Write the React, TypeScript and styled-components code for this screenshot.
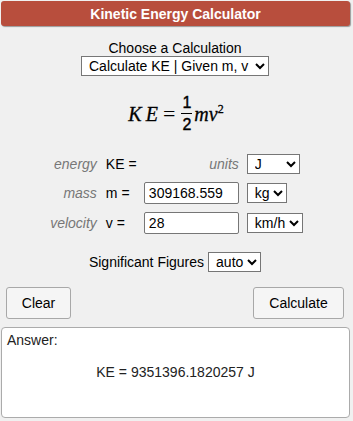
import React from "react";
import styled, { createGlobalStyle } from "styled-components";

const Global = createGlobalStyle`
  html, body { margin: 0; padding: 0; background: #f0f0f0; }
  body { font-family: "Liberation Sans", Arial, sans-serif; font-size: 14px; color: #000; }
  * { box-sizing: border-box; }
`;

const Page = styled.div`
  width: 353px;
  padding: 1px 4px 0 1px;
  display: flex;
  flex-direction: column;
`;

const Header = styled.div`
  height: 25px;
  width: 349px;
  background: #b84e3d;
  border-radius: 3px;
  box-shadow: 1px 1px 1px #9a9a9a;
  color: #fff;
  font-weight: bold;
  font-size: 14px;
  display: flex;
  align-items: center;
  justify-content: center;
`;

const ChooseBlock = styled.div`
  margin-top: 14px;
  display: flex;
  flex-direction: column;
  align-items: center;
  line-height: 16px;
`;

const Select = styled.select<{ $w: number }>`
  width: ${(p) => p.$w}px;
  height: 20px;
  font-family: "Liberation Sans", Arial, sans-serif;
  font-size: 14px;
  color: #000;
  background: #fff;
  border: 1px solid #767676;
  border-radius: 0;
  padding: 0 0 0 3px;
`;

const Formula = styled.div`
  margin-top: 16px;
  height: 43px;
  display: flex;
  justify-content: center;
  align-items: center;
  font-family: "Liberation Serif", "Times New Roman", serif;
  font-size: 20px;
  line-height: 20px;
  color: #000;
  padding-left: 2px;
`;

const MathIt = styled.span<{ $ls?: number }>`
  font-style: italic;
  letter-spacing: ${(p) => p.$ls ?? 0}px;
  -webkit-text-stroke: 0.3px #000;
`;

const Eq = styled.span`
  margin: 0 6px 0 1px;
  font-size: 22px;
`;

const Frac = styled.span`
  display: inline-flex;
  flex-direction: column;
  align-items: center;
  font-family: "Liberation Sans", Arial, sans-serif;
  font-size: 16px;
  line-height: 14px;
  margin-right: 2px;
  -webkit-text-stroke: 0.4px #000;
`;

const FracBar = styled.span`
  width: 11px;
  height: 1px;
  background: #000;
  margin: 3px 0 4px;
`;

const Sup = styled.sup`
  font-size: 12px;
  vertical-align: 8px;
  font-style: normal;
  line-height: 0;
`;

const Grid = styled.div`
  margin-top: 19px;
  padding-left: 3px;
  display: grid;
  grid-template-columns: auto 31px 95px auto;
  column-gap: 8px;
  row-gap: 8px;
  justify-content: center;
  align-items: center;
`;

const Label = styled.span`
  color: #777;
  font-style: italic;
  text-align: right;
`;

const Sym = styled.span`
  color: #000;
  white-space: nowrap;
  margin-left: 1px;
`;

const Input = styled.input`
  width: 95px;
  height: 22px;
  font-family: "Liberation Sans", Arial, sans-serif;
  font-size: 14px;
  color: #000;
  border: 1px solid #767676;
  border-radius: 2px;
  padding: 0 4px;
  background: #fff;
`;

const Sig = styled.div`
  margin-top: 18px;
  display: flex;
  justify-content: center;
  align-items: center;
  gap: 4px;
`;

const Buttons = styled.div`
  margin-top: 15px;
  display: flex;
  justify-content: space-between;
  padding: 0 5px;
`;

const Button = styled.button<{ $w: number }>`
  width: ${(p) => p.$w}px;
  height: 32px;
  font-family: "Liberation Sans", Arial, sans-serif;
  font-size: 14px;
  color: #000;
  background: #f5f5f5;
  border: 1px solid #a8a8a8;
  border-radius: 3px;
`;

const Answer = styled.div`
  margin-top: 8px;
  width: 349px;
  height: 91px;
  background: #fff;
  border: 1px solid #ababab;
  border-radius: 4px;
  padding: 4px 5px;
  color: #222;
`;

const AnswerTitle = styled.div`
  line-height: 16px;
`;

const Result = styled.div`
  margin-top: 16px;
  text-align: center;
`;

export default function App() {
  return (
    <>
      <Global />
      <Page>
        <Header>Kinetic Energy Calculator</Header>
        <ChooseBlock>
          <span>Choose a Calculation</span>
          <Select $w={188} defaultValue="ke">
            <option value="ke">Calculate KE | Given m, v</option>
          </Select>
        </ChooseBlock>
        <Formula>
          <MathIt $ls={4}>KE</MathIt>
          <Eq>=</Eq>
          <Frac>
            <span>1</span>
            <FracBar />
            <span>2</span>
          </Frac>
          <MathIt>
            mv<Sup>2</Sup>
          </MathIt>
        </Formula>
        <Grid>
          <Label>energy</Label>
          <Sym>KE =</Sym>
          <Label>units</Label>
          <Select $w={53} defaultValue="J">
            <option value="J">J</option>
          </Select>

          <Label>mass</Label>
          <Sym>m =</Sym>
          <Input defaultValue="309168.559" />
          <Select $w={40} defaultValue="kg">
            <option value="kg">kg</option>
          </Select>

          <Label>velocity</Label>
          <Sym>v =</Sym>
          <Input defaultValue="28" />
          <Select $w={56} defaultValue="kmh">
            <option value="kmh">km/h</option>
          </Select>
        </Grid>
        <Sig>
          <span>Significant Figures</span>
          <Select $w={53} defaultValue="auto">
            <option value="auto">auto</option>
          </Select>
        </Sig>
        <Buttons>
          <Button $w={65}>Clear</Button>
          <Button $w={91}>Calculate</Button>
        </Buttons>
        <Answer>
          <AnswerTitle>Answer:</AnswerTitle>
          <Result>KE = 9351396.1820257 J</Result>
        </Answer>
      </Page>
    </>
  );
}
